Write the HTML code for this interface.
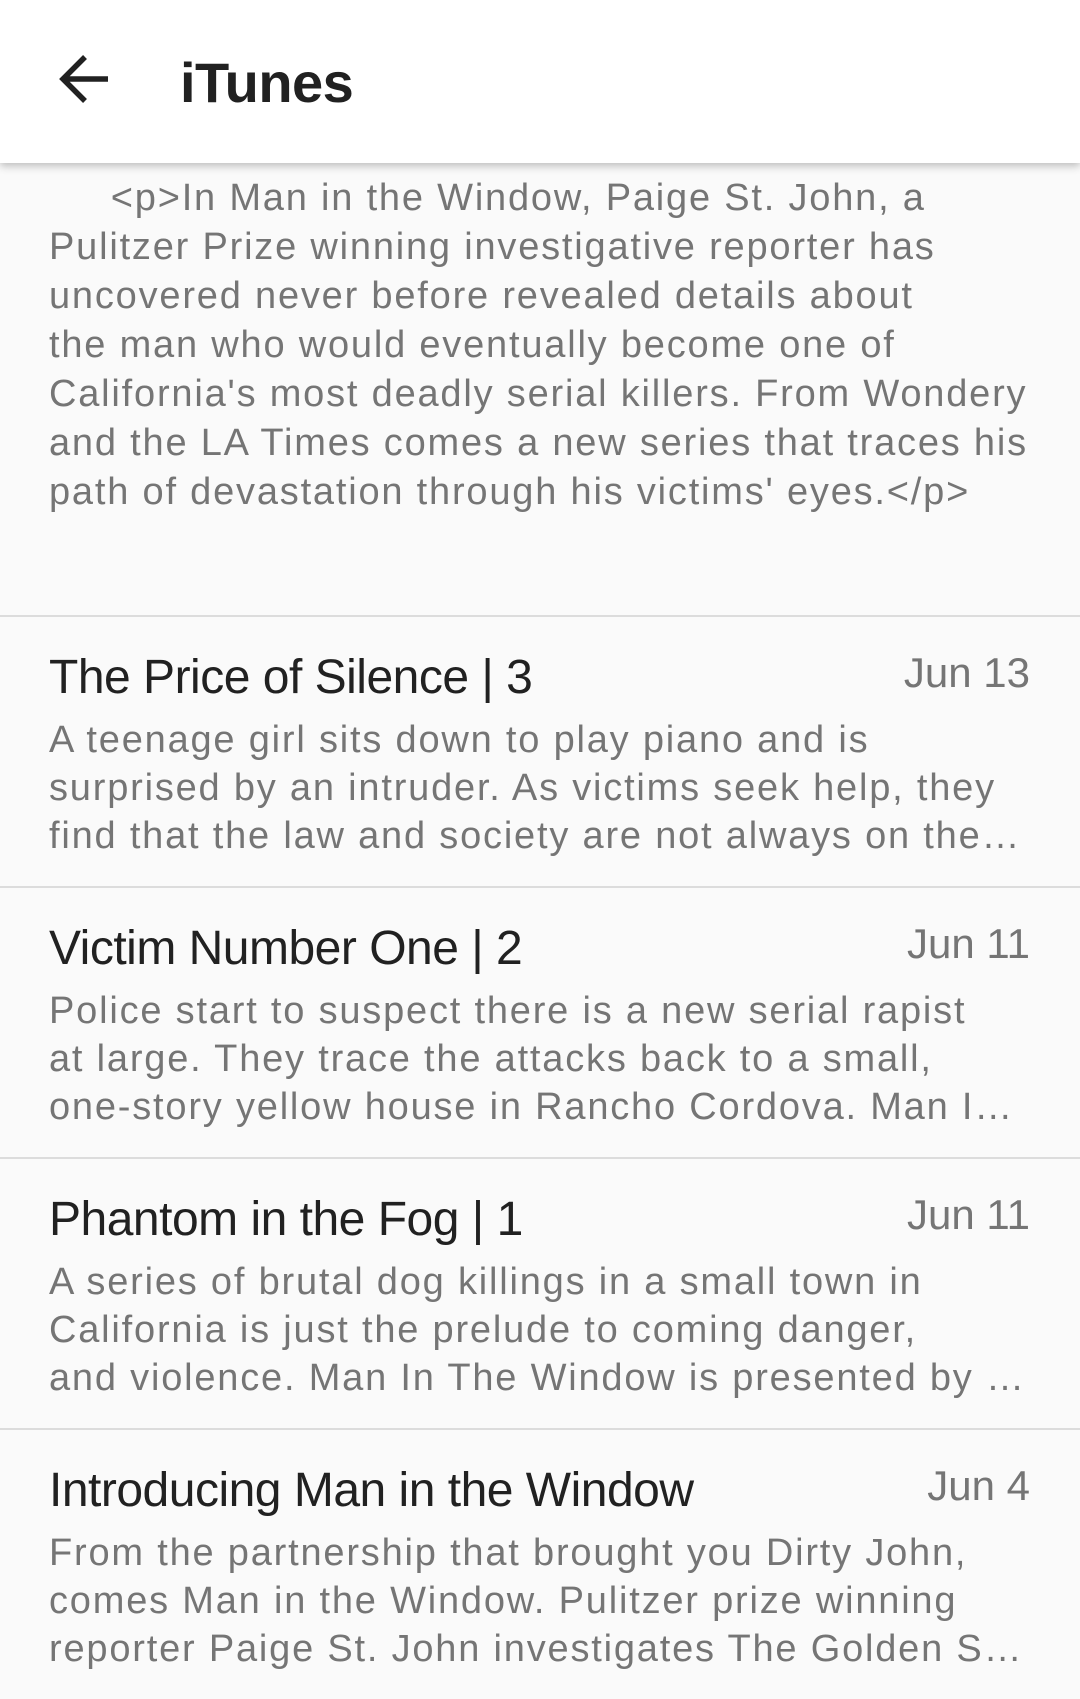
<!DOCTYPE html>
<html><head><meta charset="utf-8"><style>
html,body{margin:0;padding:0}
body{width:1080px;height:1699px;background:#fafafa;position:relative;overflow:hidden;font-family:"Liberation Sans",sans-serif}
.hdr{position:absolute;left:0;top:0;width:1080px;height:163px;background:#fff;box-shadow:0 3px 8px rgba(0,0,0,.25);z-index:2}
.hdr .t{position:absolute;left:180px;top:53px;font-size:56px;line-height:60px;color:#212121;font-weight:bold;letter-spacing:-0.5px}
.l{position:absolute;left:49px;white-space:nowrap;font-size:38px;color:#757575;letter-spacing:1.8px}
.top{top:174px;line-height:49px}
.item{position:absolute;left:0;width:1080px;height:271px;border-top:2px solid #dcdcdc;box-sizing:border-box}
.item .ti{position:absolute;left:49px;top:31px;font-size:48px;line-height:60px;color:#212121;white-space:nowrap;letter-spacing:-0.5px}
.item .dt{position:absolute;right:50px;top:31px;font-size:42px;line-height:50px;color:#757575}
.item .d{position:absolute;left:49px;top:99px;width:980px;font-size:38px;line-height:48px;color:#757575;letter-spacing:1.8px}
.item .d div{white-space:nowrap;overflow:hidden;text-overflow:ellipsis}
</style></head><body>
<div class="hdr">
<svg style="position:absolute;left:58px;top:53px" width="54" height="52" viewBox="0 0 54 52"><path d="M50 26H6M27 4L5 26l22 22" fill="none" stroke="#212121" stroke-width="5.5"/></svg>
<div class="t">iTunes</div>
</div>
<div class="l top"><div>&nbsp;&nbsp;&nbsp;&nbsp;&nbsp;&lt;p&gt;In Man in the Window, Paige St. John, a</div><div>Pulitzer Prize winning investigative reporter has</div><div>uncovered never before revealed details about</div><div>the man who would eventually become one of</div><div>California's most deadly serial killers. From Wondery</div><div>and the LA Times comes a new series that traces his</div><div>path of devastation through his victims' eyes.&lt;/p&gt;</div></div>

<div class="item" style="top:615px"><div class="ti">The Price of Silence | 3</div><div class="dt">Jun 13</div><div class="d"><div>A teenage girl sits down to play piano and is</div><div>surprised by an intruder. As victims seek help, they</div><div>find that the law and society are not always on their side.</div></div></div>
<div class="item" style="top:886px"><div class="ti">Victim Number One | 2</div><div class="dt">Jun 11</div><div class="d"><div>Police start to suspect there is a new serial rapist</div><div>at large. They trace the attacks back to a small,</div><div>one-story yellow house in Rancho Cordova. Man In The Window</div></div></div>
<div class="item" style="top:1157px"><div class="ti">Phantom in the Fog | 1</div><div class="dt">Jun 11</div><div class="d"><div>A series of brutal dog killings in a small town in</div><div>California is just the prelude to coming danger,</div><div>and violence. Man In The Window is presented by Sponsor</div></div></div>
<div class="item" style="top:1428px"><div class="ti">Introducing Man in the Window</div><div class="dt">Jun 4</div><div class="d"><div>From the partnership that brought you Dirty John,</div><div>comes Man in the Window. Pulitzer prize winning</div><div>reporter Paige St. John investigates The Golden State Killer</div></div></div>
</body></html>
